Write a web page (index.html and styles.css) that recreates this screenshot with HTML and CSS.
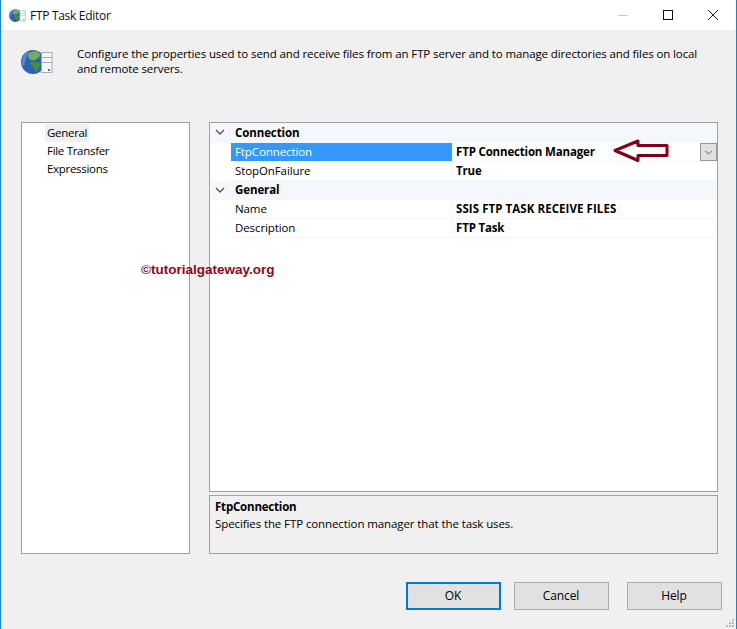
FILE: index.html
```html
<!DOCTYPE html>
<html lang="en">
<head>
<meta charset="utf-8">
<title>FTP Task Editor</title>
<link rel="stylesheet" href="styles.css">
</head>
<body>
<svg class="defs" width="0" height="0">
  <symbol id="ftp-icon" viewBox="0 0 32 26">
    <circle cx="12" cy="13" r="12" fill="#2c62b0"/>
    <path d="M0.500 13A11.500 11.500 0 0 1 8 2.500C6 7 4 11 3 18C1.500 16.500 0.500 15 0.500 13Z" fill="#4f8ad6"/>
    <path d="M8 4C12 1 19 2 19 6C18 10 13 12 10 11C7 10 6 6 8 4Z" fill="#71ad5c"/>
    <path d="M9 13C13 11.500 19 13 20 15C19 18 17 19 16 22.500C14 23 13 20 12.500 18C11 17 9 15.500 9 13Z" fill="#3f8f3f"/>
    <rect x="20.500" y="3.500" width="10.500" height="20" fill="#f4f6f8" stroke="#a3adb8"/>
    <rect x="21" y="8" width="10" height="1" fill="#a3adb8"/>
    <rect x="21" y="13" width="10" height="1" fill="#a3adb8"/>
    <rect x="27" y="20" width="2" height="2" fill="#3f9a3f"/>
  </symbol>
</svg>
<div class="window">
  <header class="titlebar">
    <svg class="title-icon"><use href="#ftp-icon"/></svg>
    <span class="title">FTP Task Editor</span>
    <div class="controls">
      <svg class="ctl" viewBox="0 0 12 12"><path d="M1 6.500H11" stroke="#c9c9c9" fill="none"/></svg>
      <svg class="ctl" viewBox="0 0 12 12"><rect x="1.500" y="1.500" width="9" height="9" stroke="#111" fill="none"/></svg>
      <svg class="ctl" viewBox="0 0 12 12"><path d="M1 1L11 11M11 1L1 11" stroke="#222" fill="none"/></svg>
    </div>
  </header>
  <section class="intro">
    <svg class="intro-icon"><use href="#ftp-icon"/></svg>
    <p class="intro-text">Configure the properties used to send and receive files from an FTP server and to manage directories and files on local and remote servers.</p>
  </section>
  <main class="content">
    <nav class="nav">
      <div class="nav-item nav-active"><span>General</span></div>
      <div class="nav-item"><span>File Transfer</span></div>
      <div class="nav-item"><span>Expressions</span></div>
    </nav>
    <div class="right">
      <div class="grid">
        <div class="cat">
          <svg class="chev" viewBox="0 0 10 6"><path d="M1 1L5 5L9 1" stroke="#555" stroke-width="1.400" fill="none"/></svg>
          <span>Connection</span>
        </div>
        <div class="prop">
          <div class="name selected">FtpConnection</div>
          <div class="value">FTP Connection Manager
            <div class="drop"><svg viewBox="0 0 10 6"><path d="M1 1L5 5L9 1" stroke="#444" fill="none"/></svg></div>
          </div>
        </div>
        <div class="prop">
          <div class="name">StopOnFailure</div>
          <div class="value">True</div>
        </div>
        <div class="cat">
          <svg class="chev" viewBox="0 0 10 6"><path d="M1 1L5 5L9 1" stroke="#555" stroke-width="1.400" fill="none"/></svg>
          <span>General</span>
        </div>
        <div class="prop">
          <div class="name">Name</div>
          <div class="value value-caps">SSIS FTP TASK RECEIVE FILES</div>
        </div>
        <div class="prop">
          <div class="name">Description</div>
          <div class="value">FTP Task</div>
        </div>
      </div>
      <div class="help">
        <div class="help-title">FtpConnection</div>
        <div class="help-text">Specifies the FTP connection manager that the task uses.</div>
      </div>
    </div>
  </main>
  <footer class="buttons">
    <button class="btn btn-default">OK</button>
    <button class="btn">Cancel</button>
    <button class="btn">Help</button>
  </footer>
  <div class="watermark">©tutorialgateway.org</div>
  <svg class="arrow" viewBox="0 0 56 24"><path d="M2 11.500L25 2V6.500H54V16.500H25V21.500Z" fill="#fff" stroke="#7f0018" stroke-width="3" stroke-linejoin="round"/></svg>
  <svg class="grip" viewBox="0 0 10 10"><path d="M7 1h2v2H7zM4 4h2v2H4zM7 4h2v2H7zM1 7h2v2H1zM4 7h2v2H4zM7 7h2v2H7z" fill="#b8b8b8"/></svg>
</div>
</body>
</html>
```
FILE: styles.css
```css
* { box-sizing: border-box; }
html, body { margin: 0; padding: 0; }
body { width: 737px; height: 629px; overflow: hidden; font-family: "Open Sans", "Noto Sans", sans-serif; font-size: 11.500px; color: #000; letter-spacing: -0.100px; }
.defs { position: absolute; }
.window { position: relative; width: 737px; height: 629px; background: #f0f0f0; border-left: 1px solid #1883d7; border-right: 1px solid #1883d7; display: flex; flex-direction: column; }
.titlebar { height: 30px; background: #fff; display: flex; align-items: center; padding-left: 8px; flex: none; }
.title-icon { width: 17px; height: 17px; margin-right: 4px; }
.title { font-size: 12px; color: #111; letter-spacing: -0.300px; }
.controls { margin-left: auto; display: flex; align-items: center; gap: 33px; padding-right: 17px; }
.ctl { width: 12px; height: 12px; display: block; }
.intro { height: 92px; padding: 16px 20px 0 20px; display: flex; flex: none; }
.intro-icon { width: 32px; height: 26px; flex: none; margin-top: 3px; margin-right: 24px; }
.intro-text { margin: 0; width: 630px; line-height: 15px; letter-spacing: -0.115px; }
.content { display: flex; gap: 19px; padding-left: 20px; height: 432px; flex: none; }
.nav { width: 169px; background: #fff; border: 1px solid #a0a0a0; padding: 1px 0 0 23px; letter-spacing: -0.300px; }
.nav-item { height: 18px; line-height: 18px; }
.nav-item span { display: inline-block; padding: 0 2px; height: 18px; }
.nav-active span { background: #f0f0f0; }
.right { width: 509px; display: flex; flex-direction: column; gap: 3px; }
.grid { height: 370px; background: #fff; border: 1px solid #a0a0a0; }
.cat { height: 19px; background: #f4f7fb; display: flex; align-items: center; font-weight: 700; padding: 0 0 2px 5px; }
.cat:first-child { height: 20px; }
.chev { width: 10px; height: 6px; margin-right: 10px; flex: none; }
.prop { height: 19px; margin-left: 21px; display: flex; background: #f4f7fb; padding-bottom: 1px; }
.name { width: 221px; height: 18px; line-height: 18px; padding-left: 4px; background: #fff; flex: none; }
.selected { background: #3399ff; color: #fff; }
.value { margin-left: 1px; flex: 1; height: 18px; line-height: 18px; padding-left: 3px; background: #fff; font-weight: 700; position: relative; letter-spacing: -0.170px; }
.value-caps { letter-spacing: 0.070px; }
.drop { position: absolute; right: 0; top: 0; width: 17px; height: 18px; background: #e1e1e1; border: 1px solid #999; display: flex; align-items: center; justify-content: center; }
.drop svg { width: 9px; height: 5px; }
.help { height: 59px; border: 1px solid #a0a0a0; padding: 2px 5px; line-height: 18px; }
.help-title { font-weight: 700; letter-spacing: -0.200px; }
.help-text { line-height: 16px; }
.buttons { flex: none; display: flex; padding: 28px 0 0 405px; }
.btn { width: 95px; height: 28px; margin-right: 13px; padding: 0 1px 2px 0; background: #e1e1e1; border: 1px solid #adadad; font: inherit; font-size: 12px; color: #000; letter-spacing: inherit; }
.btn:last-child { margin-left: 5px; }
.btn-default { border: 2px solid #0078d7; margin-right: 13px; }
.watermark { position: absolute; left: 140px; top: 262px; font-family: "Liberation Sans", Arial, sans-serif; font-size: 13.500px; font-weight: 700; color: #8b0a1a; letter-spacing: 0; white-space: nowrap; }
.arrow { position: absolute; left: 612px; top: 139px; width: 56px; height: 24px; }
.grip { position: absolute; right: 1px; bottom: 1px; width: 10px; height: 10px; }
```
